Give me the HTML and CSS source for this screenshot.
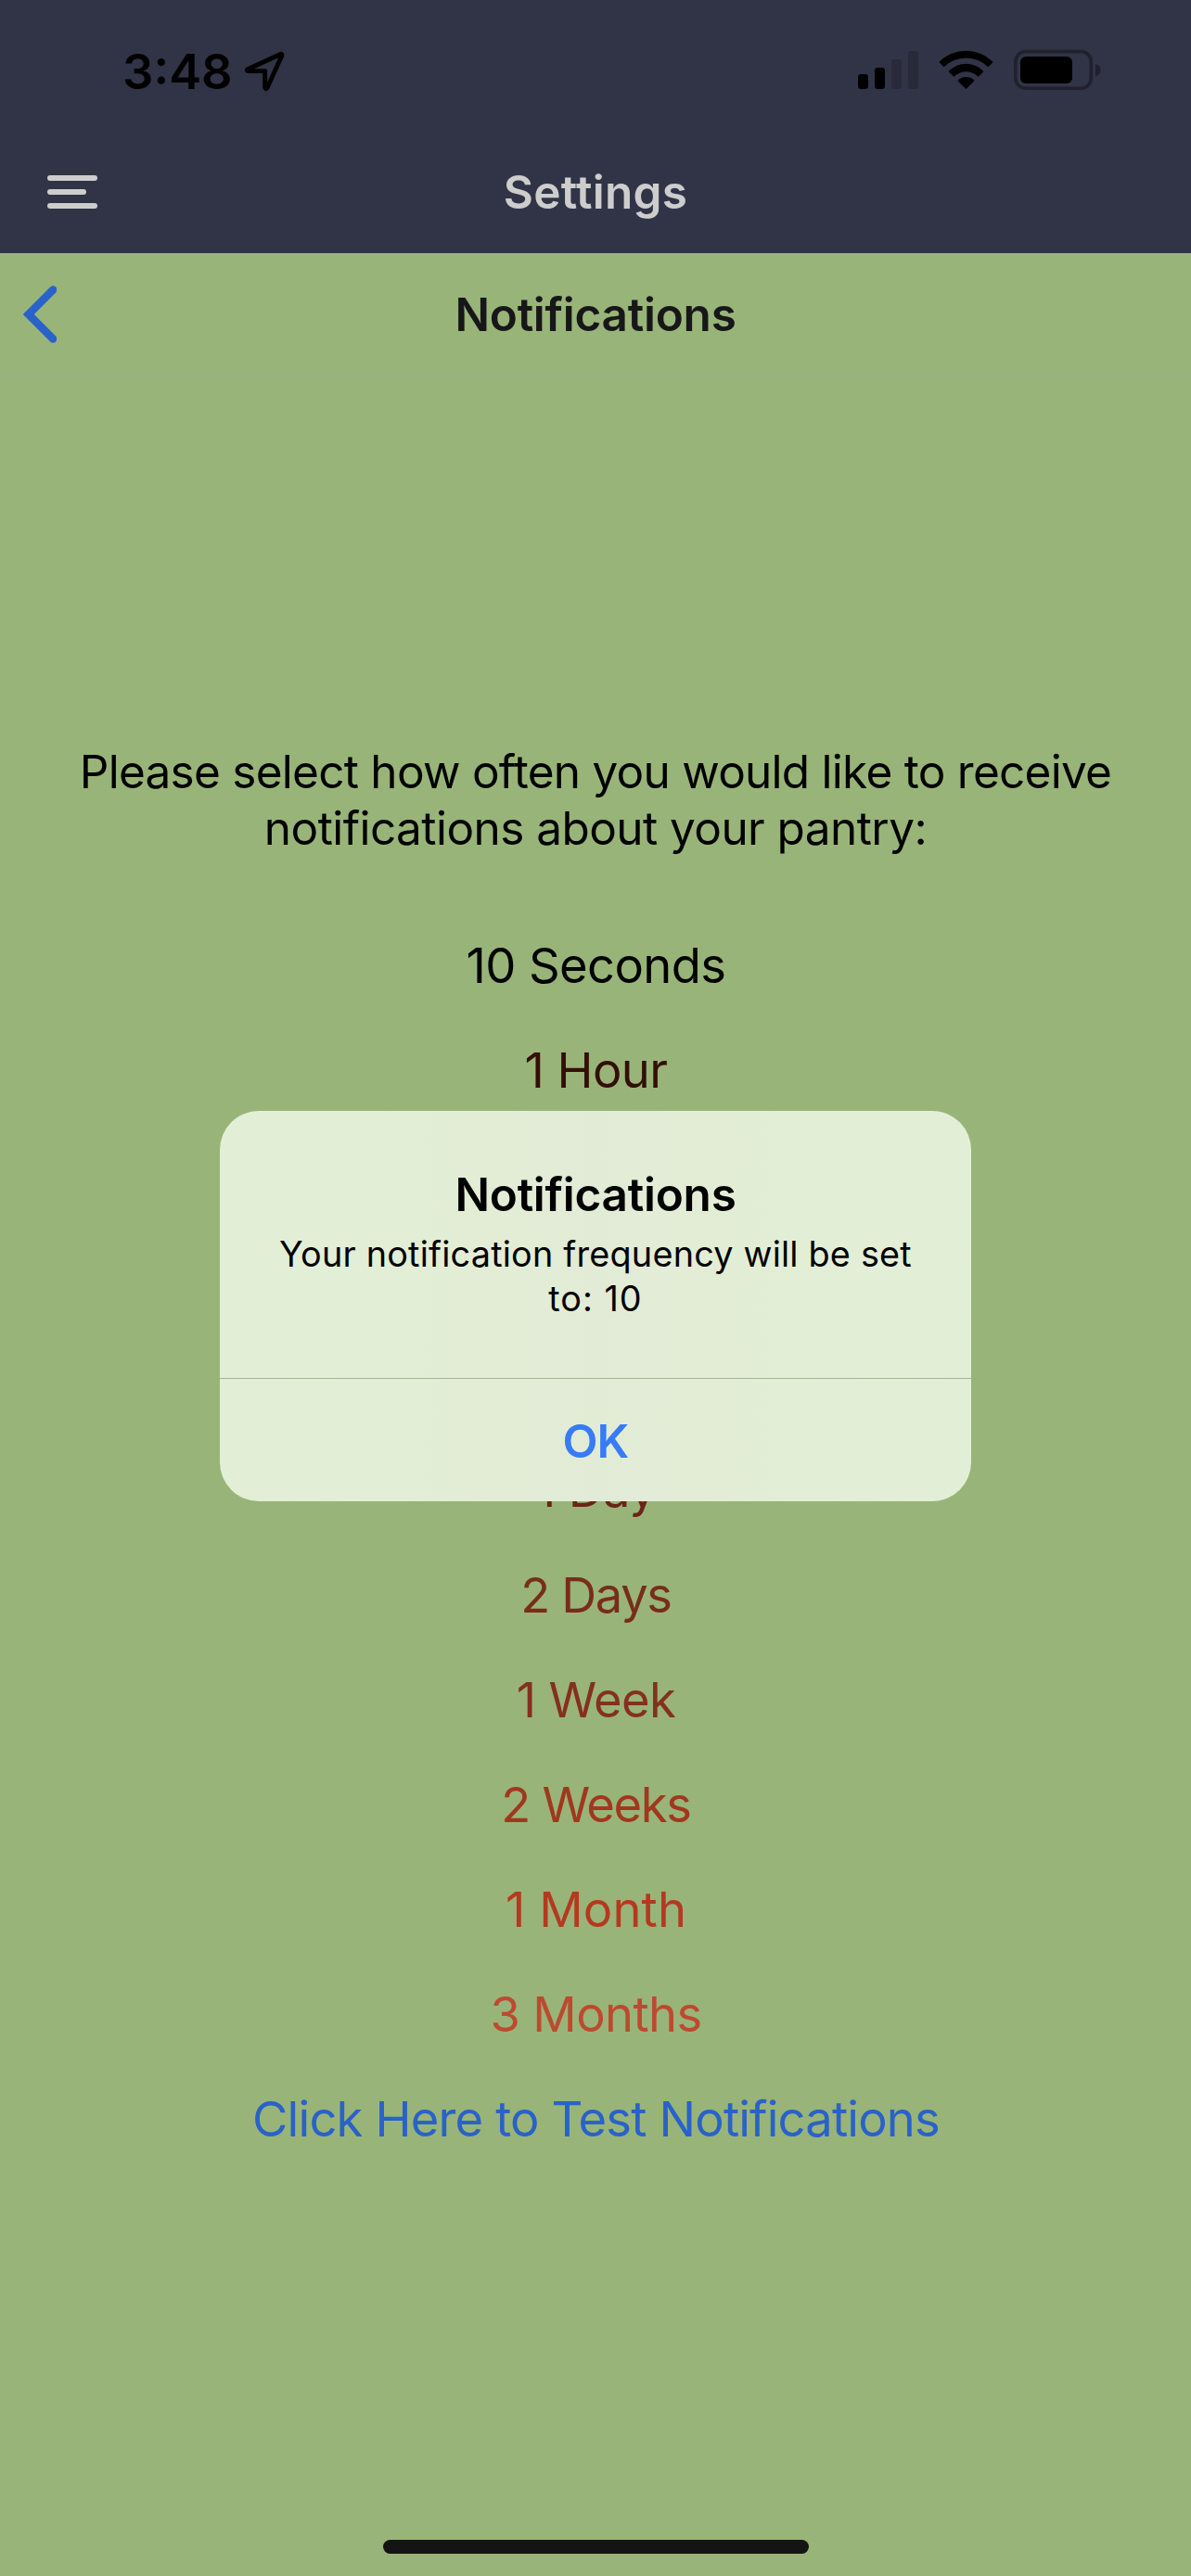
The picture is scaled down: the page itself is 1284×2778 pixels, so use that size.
FILE: index.html
```
<!DOCTYPE html>
<html lang="en">
<head>
<meta charset="utf-8">
<title>Notifications</title>
<link rel="stylesheet" href="styles.css">
</head>
<body>
<div class="screen">
  <header class="app-header">
    <div class="status-bar">
      <div class="status-left">
        <span class="time">3:48</span>
        <svg class="location" width="48" height="48" viewBox="0 0 48 48" fill="none" stroke="#000" stroke-width="4.800" stroke-linejoin="round"><path d="M42 5.200Q43.400 5.400 42.800 7L27 42Q25.200 44 24.700 41.600V23.600H6.200Q4.400 22.800 5.800 21.700Z"/></svg>
      </div>
      <svg class="status-icons" width="264" height="44" viewBox="924 53 264 44">
        <rect x="925" y="80" width="11" height="16" rx="3.300"/>
        <rect x="943" y="73" width="11" height="23" rx="3.300"/>
        <rect x="961" y="64" width="11" height="32" rx="3.300" fill="#292a39"/>
        <rect x="979" y="55" width="11" height="41" rx="3.300" fill="#292a39"/>
        <path d="M1013 66.200A41 41 0 0 1 1070 66.200Q1070.700 67 1070 67.800L1065.300 72.300A34 34 0 0 0 1017.700 72.300L1013 67.800Q1012.300 67 1013 66.200Z"/>
        <path d="M1023.200 76.200A26.500 26.500 0 0 1 1059.800 76.200Q1060.600 77 1059.800 77.800L1054.700 82.700A19 19 0 0 0 1028.300 82.700L1023.200 77.800Q1022.400 77 1023.200 76.200Z"/>
        <path d="M1033 86.200A12.700 12.700 0 0 1 1050 86.200Q1050.700 87 1050 87.800L1042.200 95.600Q1041.500 96.200 1040.800 95.600L1033 87.800Q1032.300 87 1033 86.200Z"/>
        <rect x="1094.800" y="55.600" width="81.500" height="39.600" rx="11" fill="none" stroke="#20212d" stroke-width="3.500"/>
        <rect x="1100" y="61" width="56" height="29" rx="6"/>
        <path d="M1181 69Q1186.500 70.500 1186.500 75.500T1181 82.200Z" fill="#20212d"/>
      </svg>
    </div>
    <div class="nav-bar">
      <svg class="menu" width="54" height="36" viewBox="0 0 54 36" fill="#cdcdcd"><rect width="54" height="6" rx="3"/><rect y="15" width="42" height="6" rx="3"/><rect y="30" width="54" height="6" rx="3"/></svg>
      <h1 class="nav-title">Settings</h1>
    </div>
  </header>
  <div class="sub-nav">
    <svg class="back" width="36" height="62" viewBox="0 0 36 62" fill="none" stroke="#2962c8" stroke-width="8.400" stroke-linecap="round"><path d="M32.200 4.500 5.800 31 32.200 57.500"/></svg>
    <h2 class="sub-title">Notifications</h2>
  </div>
  <main class="content">
    <p class="prompt"><span class="line-one">Please select how often you would like to receive</span><br>notifications about your pantry:</p>
    <ul class="options">
      <li class="seconds">10 Seconds</li>
      <li class="hour">1 Hour</li>
      <li class="day">1 Day</li>
      <li class="two-days">2 Days</li>
      <li class="week">1 Week</li>
      <li class="two-weeks">2 Weeks</li>
      <li class="month">1 Month</li>
      <li class="months">3 Months</li>
      <li class="test">Click Here to Test Notifications</li>
    </ul>
  </main>
  <div class="home-indicator"></div>
  <section class="alert" role="alertdialog">
    <div class="alert-body">
      <h3 class="alert-title">Notifications</h3>
      <p class="alert-message">Your notification frequency will be set<br><span class="value">to: 10</span></p>
    </div>
    <button class="alert-button">OK</button>
  </section>
</div>
</body>
</html>
```
FILE: styles.css
```
* { box-sizing: border-box; margin: 0; padding: 0; }

body { font-family: Inter, "Liberation Sans", sans-serif; }

.screen {
  position: relative;
  display: flex;
  flex-direction: column;
  width: 1284px;
  height: 2778px;
  overflow: hidden;
  background: #99b478;
  color: #000;
}

/* Header */
.app-header {
  height: 274px;
  background: #313346;
  border-bottom: 1px solid #a5a8a0;
}

.status-bar {
  display: flex;
  justify-content: space-between;
  height: 141px;
  padding: 53px 96px 0 132px;
}

.status-left { display: flex; gap: 10px; }

.time {
  font-size: 52.5px;
  font-weight: 600;
  line-height: 48px;
}

.status-icons { display: block; }

.nav-bar,
.sub-nav {
  display: grid;
  grid-template-columns: 160px 1fr 160px;
  align-items: center;
  height: 132px;
}

.sub-nav { border-bottom: 1px solid #a3a8a6; }

.menu { margin-left: 51px; }

.back { margin: -1px 0 0 25px; }

.nav-title,
.sub-title {
  padding-bottom: 2px;
  font-size: 49.5px;
  font-weight: 600;
  line-height: 60px;
  text-align: center;
}

.nav-title { padding-bottom: 1px; color: #cdcdcd; letter-spacing: 0.27px; }

.sub-title { color: #171719; letter-spacing: -0.25px; }

/* Content */
.content {
  flex: 1;
  padding-top: 396px;
  text-align: center;
}

.prompt {
  font-size: 49.5px;
  line-height: 61px;
  letter-spacing: -0.56px;
}

.line-one { letter-spacing: -0.74px; }

.options {
  margin-top: 61px;
  padding-left: 1px;
  list-style: none;
  font-size: 52.5px;
  line-height: 113.1px;
  letter-spacing: -0.6px;
}

.hour { color: #330f07; }
.day { margin-top: 339.3px; color: #6a2418; }
.two-days { color: #782d1c; letter-spacing: -1.38px; }
.week { color: #843020; }
.two-weeks { color: #a1371f; letter-spacing: -1.31px; }
.month { color: #b43920; letter-spacing: 0.13px; }
.months { color: #bd4a30; }
.test { color: #2962c8; letter-spacing: -0.83px; }

.home-indicator {
  width: 459px;
  height: 15px;
  margin: 0 auto 24px;
  border-radius: 8px;
  background: #141414;
}

/* Alert */
.alert {
  position: absolute;
  left: 237px;
  top: 1198px;
  display: flex;
  flex-direction: column;
  width: 810px;
  height: 421px;
  overflow: hidden;
  border-radius: 42px;
  background: linear-gradient(90deg, #e2efd7, #e3edd6 35%, #e2ebd6 50%, #e3edd6 65%, #e2efd7);
  text-align: center;
}

.alert-body {
  height: 289px;
  padding-top: 60px;
  border-bottom: 1px solid #a6b594;
}

.alert-title {
  font-size: 49.5px;
  font-weight: 600;
  line-height: 60px;
  letter-spacing: -0.25px;
}

.alert-message {
  margin-top: 10px;
  font-size: 37.8px;
  line-height: 48px;
  letter-spacing: 0.2px;
}

.value { letter-spacing: 1px; }

.alert-button {
  flex: 1;
  padding-top: 1px;
  border: 0;
  background: none;
  color: #377bf7;
  font: 600 49.5px/60px Inter, "Liberation Sans", sans-serif;
  letter-spacing: -1px;
}
```
